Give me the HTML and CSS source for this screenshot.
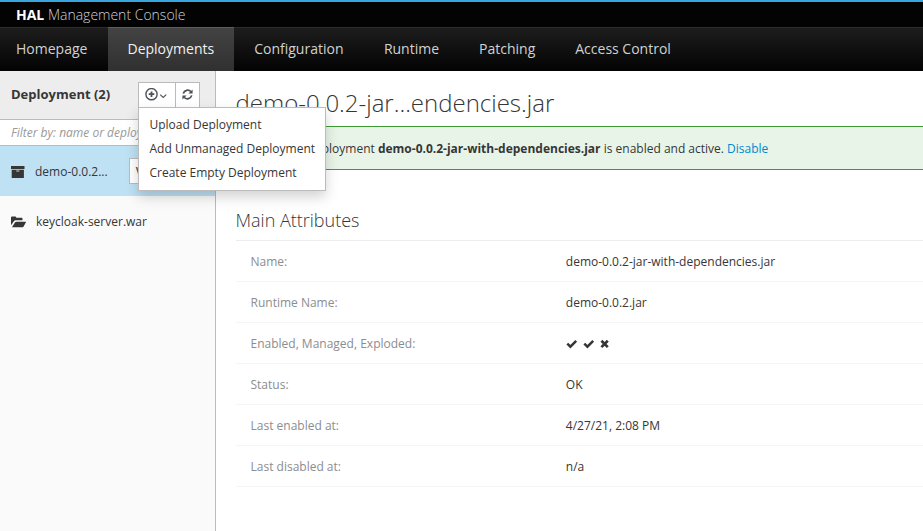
FILE: index.html
```html
<!DOCTYPE html>
<html lang="en">
<head>
<meta charset="utf-8">
<title>HAL Management Console</title>
<link rel="stylesheet" href="styles.css">
</head>
<body>
<header class="brand"><b>HAL</b>&nbsp;Management Console</header>
<nav class="nav">
  <a class="nav-home">Homepage</a>
  <a class="nav-active">Deployments</a>
  <a class="nav-config">Configuration</a>
  <a class="nav-runtime">Runtime</a>
  <a class="nav-patching">Patching</a>
  <a>Access Control</a>
</nav>
<div class="layout">
  <aside class="sidebar">
    <div class="column-head">
      <h1 class="column-title">Deployment (2)</h1>
      <div class="buttons">
        <button class="btn btn-add" aria-label="Add">
          <svg width="24" height="14" viewBox="0 0 24 14" fill="none" stroke="#4d5258"><circle cx="6.5" cy="6.2" r="5.6" stroke-width="1.4"/><path d="M6.5 3.4v5.6M3.7 6.2h5.6" stroke-width="1.8"/><path d="M15.2 6.6l3 2.9 3-2.9" stroke-width="1.1"/></svg>
        </button>
        <button class="btn btn-refresh" aria-label="Refresh">
          <svg width="12" height="12" viewBox="0 0 12 12"><g fill="none" stroke="#4d5258" stroke-width="1.7"><path d="M1.3 4.6A4.5 4.5 0 0 1 9 2.7"/><path d="M9.7 6.4A4.5 4.5 0 0 1 2 8.3"/></g><path d="M10.6 .4v4.2H6.4zM.4 10.6V6.4h4.2z" fill="#4d5258"/></svg>
        </button>
        <ul class="menu">
          <li>Upload Deployment</li>
          <li>Add Unmanaged Deployment</li>
          <li>Create Empty Deployment</li>
        </ul>
      </div>
    </div>
    <div class="filter">Filter by: name or deployment</div>
    <div class="item item-selected">
      <svg class="item-icon" width="14" height="12" viewBox="0 0 14 12"><path fill="#363636" fill-rule="evenodd" d="M0 0h13.5v3H0zM.7 3.7h12.2V12H.7zM5.3 4.6v1h3v-1z"/></svg>
      <span class="item-name">demo-0.0.2...</span>
      <button class="view">View</button>
    </div>
    <div class="item item-war">
      <svg class="item-icon" width="15" height="12" viewBox="0 0 15 12"><path fill="#363636" d="M0 9.2V1.5Q0 .5 1 .5h3.2q1 0 1 1v.3h5.3q1 0 1 1v1.5H4.6q-1 0-1.7.9zM1 11.3l2.9-4.7q.5-.9 1.6-.9h9q.8 0 .3.9l-2.2 3.8q-.5.9-1.6.9z"/></svg>
      <span class="item-name">keycloak-server.war</span>
    </div>
  </aside>
  <main class="main">
    <h1 class="title">demo-0.0.2-jar...endencies.jar</h1>
    <div class="alert"><span>The deployment <b>demo-0.0.2-jar-with-dependencies.jar</b> is enabled and active. <a>Disable</a></span></div>
    <h2 class="subtitle">Main Attributes</h2>
    <dl class="attributes">
      <div class="row"><dt>Name:</dt><dd>demo-0.0.2-jar-with-dependencies.jar</dd></div>
      <div class="row"><dt>Runtime Name:</dt><dd>demo-0.0.2.jar</dd></div>
      <div class="row"><dt>Enabled, Managed, Exploded:</dt><dd>
        <svg class="flags" width="44" height="10" viewBox="0 0 44 10" fill="none" stroke="#363636" stroke-width="2.5"><path d="M1.3 4.7l3.1 3 5.8-5.8"/><path d="M18.3 4.7l3.1 3 5.8-5.8"/><path stroke-width="2.7" d="M35.4 1.7l6.4 6.4M41.8 1.7l-6.4 6.4"/></svg>
      </dd></div>
      <div class="row"><dt>Status:</dt><dd>OK</dd></div>
      <div class="row"><dt>Last enabled at:</dt><dd>4/27/21, 2:08 PM</dd></div>
      <div class="row"><dt>Last disabled at:</dt><dd>n/a</dd></div>
    </dl>
  </main>
</div>
</body>
</html>
```
FILE: styles.css
```css
* { box-sizing: border-box; }
body {
  margin: 0;
  height: 531px;
  overflow: hidden;
  display: flex;
  flex-direction: column;
  background: #fff;
  color: #363636;
  font: 12px/20px "Open Sans", sans-serif;
}
h1, h2, ul, dl, dd { margin: 0; padding: 0; }
svg { display: block; flex: none; }

.brand {
  height: 27px;
  flex: none;
  padding: 3px 16px 0;
  border-top: 2px solid #39a5dc;
  background: #030303;
  color: #d1d1d1;
  font-size: 14px;
  font-weight: 300;
}
.brand b { color: #fff; font-weight: 700; }

.nav {
  height: 44px;
  flex: none;
  display: flex;
  border-top: 1px solid #2b2b2b;
  background: linear-gradient(#1d1d1d, #030303);
}
.nav a {
  padding: 11px 20px 0 20.4px;
  color: #d1d1d1;
  font-size: 14px;
  white-space: nowrap;
}
.nav .nav-home { width: 108px; padding-left: 16px; padding-right: 0; }
.nav .nav-active {
  width: 126px;
  margin-top: -1px;
  padding: 11px 0 0 19.5px;
  border-top: 1px solid #5c5c5c;
  background: linear-gradient(#434343, #303030);
  color: #f1f1f1;
}
.nav .nav-config { width: 129.7px; padding-left: 20.2px; }
.nav .nav-runtime { width: 95px; padding-left: 20.2px; }
.nav .nav-patching { width: 96.2px; }

.layout { flex: 1; display: flex; min-height: 0; }
.sidebar {
  width: 216px;
  flex: none;
  border-right: 1px solid #bbb;
  background: #fafafa;
}
.column-head {
  height: 49px;
  display: flex;
  justify-content: space-between;
  padding: 11px 15px 0 11px;
  border-bottom: 1px solid #bbb;
  background: #ededed;
}
.column-title { padding-top: 2px; font-size: 13px; line-height: 20px; font-weight: 700; }
.buttons { position: relative; display: flex; height: 26px; }
.btn {
  padding: 0;
  display: flex;
  align-items: center;
  justify-content: center;
  border: 1px solid #bbb;
  background: #fff;
}
.btn-add { width: 38px; }
.btn-refresh { width: 25px; margin-left: -1px; }
.menu {
  position: absolute;
  z-index: 2;
  top: 25px;
  left: 0;
  width: 188px;
  height: 84px;
  padding: 5px 0;
  border: 1px solid #bbb;
  background: #fff;
  box-shadow: 0 6px 12px rgba(3, 3, 3, .175);
  list-style: none;
}
.menu li { height: 24px; padding: 2px 10.5px; white-space: nowrap; }
.filter {
  height: 26px;
  padding: 3px 11px 2px;
  overflow: hidden;
  border-bottom: 1px solid #bbb;
  background: #fff;
  color: #999;
  font-style: italic;
  white-space: nowrap;
}
.item { height: 50px; display: flex; align-items: center; padding-left: 11px; }
.item-selected { background: #bee1f4; }
.item-icon { margin-right: 10px; }
.item-selected .item-icon { margin-top: 2px; }
.item-selected .item-name { padding-top: 1px; }
.item-war { padding-top: 2px; }
.view {
  width: 60px;
  height: 26px;
  margin-left: 21px;
  padding: 0 6px;
  border: 1px solid #bbb;
  background: #fff;
  color: #4d5258;
  font: 600 12px "Open Sans", sans-serif;
  text-align: left;
}

.main { flex: 1; min-width: 0; padding-left: 19.5px; }
.title { height: 55px; padding-top: 16px; font-size: 24px; line-height: 32px; font-weight: 300; }
.alert {
  height: 44px;
  display: flex;
  align-items: center;
  padding: 2px 0 0 47.3px;
  border: 1px solid #3f9c35;
  border-right: 0;
  background: #e9f4e9;
  white-space: nowrap;
}
.alert a { color: #0088ce; }
.subtitle { height: 71px; padding-top: 38px; border-bottom: 1px solid #ededed; font-size: 18px; line-height: 25px; font-weight: 300; }
.row { height: 41px; display: flex; align-items: center; padding-top: 2px; border-bottom: 1px solid #f5f5f5; }
.row dt { width: 330.3px; padding-left: 15px; color: #8b8d8f; }
.flags { margin-top: -1px; }
```
